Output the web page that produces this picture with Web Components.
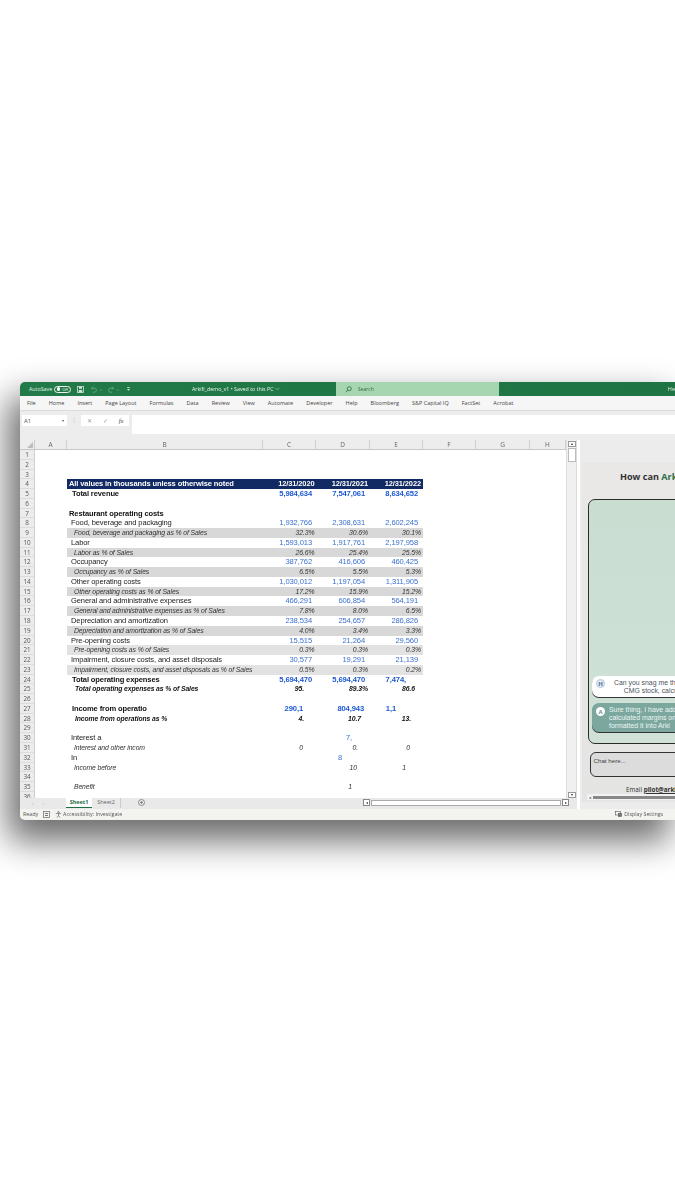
<!DOCTYPE html>
<html><head><meta charset="utf-8"><title>Arkifi demo</title>
<style>
html,body{margin:0;padding:0;background:#fff;overflow:hidden;height:1200px}
body{padding:382px 0 0 20px;box-sizing:border-box;font-family:"Liberation Sans",Arial,sans-serif}
</style></head><body>
<x-window>
  <x-titlebar></x-titlebar>
  <x-ribbon></x-ribbon>
  <x-formula></x-formula>
  <x-main>
    <x-sheet></x-sheet>
    <x-pane></x-pane>
  </x-main>
  <x-status></x-status>
</x-window>
<script>
function el(name,css,html){
  customElements.define(name,class extends HTMLElement{
    constructor(){super();this.attachShadow({mode:'open'}).innerHTML='<style>'+css+'</style>'+html;}
  });
}
const UI='"Open Sans","Noto Sans",sans-serif';
el('x-window',`:host{display:flex;flex-direction:column;width:655px;height:438px;background:#f1f1f1;border-radius:5px 0 0 5px;box-shadow:-9px 18px 34px 3px rgba(0,0,0,.58);filter:blur(.45px);overflow:hidden}`,`<slot></slot>`);

el('x-titlebar',`:host{display:flex;align-items:center;height:14px;background:linear-gradient(90deg,#217a48,#1f7444);color:#e6f2ea;font:5.3px ${UI};flex:none;position:relative}
.l{display:flex;align-items:center;margin-left:9px;width:163px}
.pill{display:flex;align-items:center;gap:2px;width:17px;height:7px;border:.7px solid #eaf4ee;border-radius:4px;box-sizing:border-box;padding-left:1.5px;font-size:4px;margin:0 6px 0 2px}
.pill i{width:3.5px;height:3.5px;border-radius:50%;background:#fff}
svg{display:block;flex:none}
.t{width:144px;text-align:left;color:#eef6f1}
.s{display:flex;align-items:center;gap:6px;width:163px;height:14px;background:#a5d6b0;color:#2c6a45;box-sizing:border-box;padding-left:9px;font-size:5px}
.he{margin-left:169px;font-size:5.5px}`,
`<div class="l"><span>AutoSave</span><span class="pill"><i></i>Off</span>
<svg style="margin-right:6px" width="7" height="7" viewBox="0 0 7 7"><rect x=".5" y=".5" width="6" height="6" fill="none" stroke="#cfe3d6" stroke-width=".8"/><rect x="2" y=".8" width="3" height="2" fill="#cfe3d6"/><rect x="1.7" y="4" width="3.6" height="2.4" fill="#cfe3d6"/></svg>
<svg style="margin-right:3px" width="14" height="7" viewBox="0 0 14 7" fill="none" stroke="#6fae88" stroke-width=".8"><path d="M1.5 2.2h3a2 2 0 0 1 0 4H3M1.5 2.2l1.5-1.5M1.5 2.2l1.5 1.5"/><path d="M10 3.5l1 1 1-1" /></svg>
<svg style="margin-right:5px" width="14" height="7" viewBox="0 0 14 7" fill="none" stroke="#6fae88" stroke-width=".8"><path d="M6.500 2.200h-3a2 2 0 0 0 0 4H5M6.500 2.200L5 .7M6.500 2.200L5 3.700"/><path d="M10 3.500l1 1 1-1"/></svg>
<svg width="5" height="6" viewBox="0 0 5 6" fill="#d6e8dc"><rect x="1" y="1" width="3" height=".7"/><path d="M1 3h3L2.500 4.800z"/></svg></div>
<div class="t">Arkifi_demo_v1 • Saved to this PC ﹀</div>
<div class="s"><svg width="7" height="7" viewBox="0 0 7 7" fill="none" stroke="#2c6a45" stroke-width=".8"><circle cx="4.300" cy="2.700" r="2"/><path d="M2.800 4.200L.8 6.200"/></svg><span>Search</span></div>
<div class="he">He</div>`);

el('x-ribbon',`:host{display:flex;align-items:center;height:15px;background:#f6f6f6;border-bottom:1px solid #dcdcdc;box-sizing:border-box;padding-left:7px;font:5.5px ${UI};color:#444;flex:none}
span{margin-right:13.07px;white-space:nowrap}`,
['File','Home','Insert','Page Layout','Formulas','Data','Review','View','Automate','Developer','Help','Bloomberg','S&amp;P Capital IQ','FactSet','Acrobat'].map(t=>`<span>${t}</span>`).join(''));

el('x-formula',`:host{display:flex;align-items:flex-start;gap:3px;height:29px;background:#ededed;box-sizing:border-box;padding:4px 0 0 2px;font:6px ${UI};color:#555;flex:none}
.nb{display:flex;align-items:center;justify-content:space-between;width:45px;height:11px;background:#fff;box-sizing:border-box;padding:0 3px 0 2px}
.sep{width:10px;height:11px;text-align:center;color:#bbb;line-height:11px;margin:0 -1px}
.fx{display:flex;align-items:center;justify-content:space-around;width:48px;height:11px;background:#fff;color:#999}
.fx b{font:italic 6.500px "Liberation Serif",serif;color:#444}
.in{flex:1;height:19px;background:#fff}`,
`<div class="nb"><span>A1</span><span style="font-size:4px">▾</span></div><div class="sep">⋮</div><div class="fx"><span>✕</span><span>✓</span><b>fx</b></div><div class="in"></div>`);

el('x-main',`:host{display:flex;height:369px;flex:none;overflow:hidden}`,`<slot></slot>`);

const cols=[['A',32],['B',196],['C',53],['D',54],['E',53],['F',53],['G',54],['H',36]];
const F='"Liberation Sans",Arial,sans-serif';
const pct=(l,a,b,c)=>({t:'p',l,v:[[a,1.5],[b,2],[c,2]]});
const num=(l,a,b,c)=>({t:'n',l,v:[[a,4],[b,5],[c,5]]});
const R={
4:{t:'h',l:'All values in thousands unless otherwise noted',v:[['12/31/2020',1.5],['12/31/2021',2],['12/31/2022',2]]},
5:{t:'b',l:'Total revenue',x:5,v:[['5,984,634',4],['7,547,061',5],['8,634,652',5]]},
7:{t:'s',l:'Restaurant operating costs'},
8:num('Food, beverage and packaging','1,932,766','2,308,631','2,602,245'),
9:pct('Food, beverage and packaging as % of Sales','32.3%','30.6%','30.1%'),
10:num('Labor','1,593,013','1,917,761','2,197,958'),
11:pct('Labor as % of Sales','26.6%','25.4%','25.5%'),
12:num('Occupancy','387,762','416,606','460,425'),
13:pct('Occupancy as % of Sales','6.5%','5.5%','5.3%'),
14:num('Other operating costs','1,030,012','1,197,054','1,311,905'),
15:pct('Other operating costs as % of Sales','17.2%','15.9%','15.2%'),
16:num('General and administrative expenses','466,291','606,854','564,191'),
17:pct('General and administrative expenses as % of Sales','7.8%','8.0%','6.5%'),
18:num('Depreciation and amortization','238,534','254,657','286,826'),
19:pct('Depreciation and amortization as % of Sales','4.0%','3.4%','3.3%'),
20:num('Pre-opening costs','15,515','21,264','29,560'),
21:{...pct('Pre-opening costs as % of Sales','0.3%','0.3%','0.3%'),g:1},
22:num('Impairment, closure costs, and asset disposals','30,577','19,291','21,139'),
23:{...pct('Impairment, closure costs, and asset disposals as % of Sales','0.5%','0.3%','0.2%'),g:1},
24:{t:'b',l:'Total operating expenses',x:5,v:[['5,694,470',4],['5,694,470',5],['7,474,',17]]},
25:{t:'bi',l:'Total operating expenses as % of Sales',v:[['95.',12],['89.3%',2],['86.6',8]]},
27:{t:'b',l:'Income from operatio',x:5,v:[['290,1',13],['804,943',6],['1,1',27]]},
28:{t:'bi',l:'Income from operations as %',v:[['4.',12],['10.7',9],['13.',12]]},
30:{t:'n',l:'Interest a',v:[['',0],['7,',18],['',0]]},
31:{t:'i',l:'Interest and other incom',v:[['0',13],['0.',12],['0',13]]},
32:{t:'n',l:'In',v:[['',0],['8',28],['',0]]},
33:{t:'i',l:'Income before',v:[['',0],['10',13],['1',17]]},
35:{t:'i',l:'Benefit',v:[['',0],['1',18],['',0]]}
};
let rows='';
for(let i=1;i<=36;i++){
  const r=R[i]||{t:'e',l:''};
  const x=r.x!==undefined?r.x:({h:2,s:2,n:4,p:7,bi:8,i:7,e:0})[r.t];
  rows+=`<div class="row ${r.t}${r.g?' g':''}"><div class="hd">${i}</div><div class="a"></div><div class="bb"><div class="lbl" style="padding-left:${x}px">${r.l}</div>`+
   `<div class="v" style="width:53px">${r.v?`<span style="padding-right:${r.v[0][1]}px">${r.v[0][0]}</span>`:''}</div>`+
   `<div class="v" style="width:54px">${r.v?`<span style="padding-right:${r.v[1][1]}px">${r.v[1][0]}</span>`:''}</div>`+
   `<div class="v" style="width:53px">${r.v?`<span style="padding-right:${r.v[2][1]}px">${r.v[2][0]}</span>`:''}</div></div></div>`;
}
el('x-sheet',`:host{display:grid;grid-template-columns:546px 11px;grid-template-rows:358px 11px;width:560px;flex:none;background:#fff;font-family:${F}}
.main{overflow:hidden;height:358px}
.ch{display:flex;height:9px;background:#ededed;border-bottom:.8px solid #c8c8c8;box-sizing:content-box;font:6.500px ${UI};color:#666}
.corner{width:15px;position:relative;background:#ededed;border-right:.5px solid #ccc;box-sizing:border-box}
.corner:after{content:"";position:absolute;right:1px;bottom:1px;border:solid transparent;border-width:0 0 6px 6px;border-bottom-color:#bdbdbd}
.ch div.c{text-align:center;border-right:.5px solid #d0d0d0;box-sizing:border-box;line-height:9px;flex:none}
.row{display:flex;height:9.77px;line-height:9.77px;font-size:7.55px;letter-spacing:-.12px;white-space:nowrap}
.hd{width:15px;flex:none;background:#ececec;border-right:.5px solid #cfcfcf;border-bottom:.5px solid #dcdcdc;box-sizing:border-box;font:6.300px/9.500px ${UI};color:#555;text-align:center;letter-spacing:0}
.a{width:32px;flex:none}
.bb{display:flex;width:356px;color:#222}
.lbl{width:196px;flex:none;box-sizing:border-box;overflow:visible;white-space:nowrap}
.v{flex:none;text-align:right;color:#3b70d0;overflow:visible;box-sizing:border-box;font-size:7.6px}
.h .bb{background:#112a63;color:#fff;font-weight:700}.h .v{color:#fff;font-size:7.500px}
.b .bb,.s .bb{font-weight:700;color:#111}.b .v{color:#1c59d4}
.p .bb{background:#d8d8d8;font-size:6.800px;letter-spacing:-.1px;font-style:italic;color:#333}.p .v{color:#333;font-size:6.900px}
.p.g .bb{background:#e2e2e2}
.bi .bb{font-size:6.800px;letter-spacing:-.1px;font-style:italic;font-weight:700;color:#111}.bi .v{color:#111;font-size:6.900px}
.i .bb{font-size:6.800px;letter-spacing:-.1px;font-style:italic;color:#333}.i .v{color:#333;font-size:6.900px}
.sv{grid-row:1;grid-column:2;display:flex;flex-direction:column;align-items:center;background:#f0f0f0;border-left:.5px solid #ddd;border-right:.5px solid #ddd;height:358px;box-sizing:border-box;padding-top:1px}
.btn{width:8px;height:6px;background:#fff;border:.5px solid #999;display:flex;align-items:center;justify-content:center;box-sizing:border-box;flex:none}
.btn i{border:solid transparent;border-width:0 1.5px 2px;border-bottom-color:#333}
.dn i{transform:rotate(180deg)}
.th{width:8px;height:14px;background:#fff;border:.5px solid #bbb;box-sizing:border-box;margin-top:1px}
.grow{flex:1}
.tabs{grid-row:2;grid-column:1/3;display:flex;align-items:center;height:11px;background:#e9e9e9;font:5.500px ${UI};color:#666;box-sizing:border-box;padding-bottom:1.5px}
.nav{width:46px;padding-left:12px;box-sizing:border-box;color:#aaa;font-size:5px;word-spacing:8px}
.t1{width:26px;height:9.500px;line-height:8.500px;text-align:center;background:#fff;color:#1d6b42;font-weight:700;border-bottom:1.2px solid #1d6b42;box-sizing:border-box}
.t2{width:28px;text-align:center;border-right:.5px solid #ccc;line-height:9.500px}
.add{margin-left:17px;flex:none}
.hs{margin-left:218px;display:flex;align-items:center;height:8px;gap:1px;flex:none;width:206px}
.hb{width:7px;height:7px;background:#fff;border:.5px solid #888;box-sizing:border-box;display:flex;align-items:center;justify-content:center;flex:none}
.hb i{border:solid transparent;border-width:1.5px 2px 1.5px 0;border-right-color:#333}
.hb.r i{transform:rotate(180deg)}
.ht{flex:1;height:6px;background:#fff;border:.5px solid #aaa;box-sizing:border-box}`,
`<div class="main"><div class="ch"><div class="corner"></div>${cols.map(c=>`<div class="c" style="width:${c[1]}px">${c[0]}</div>`).join('')}</div>${rows}</div>
<div class="sv"><div class="btn"><i></i></div><div class="th"></div><div class="grow"></div><div class="btn dn"><i></i></div></div>
<div class="tabs"><div class="nav">‹ ›</div><div class="t1">Sheet1</div><div class="t2">Sheet2</div>
<svg class="add" width="7" height="7" viewBox="0 0 7 7" fill="none" stroke="#555" stroke-width=".6"><circle cx="3.500" cy="3.500" r="3"/><path d="M3.500 2v3M2 3.500h3"/></svg>
<div class="hs"><div class="hb"><i></i></div><div class="ht"></div><div class="hb r"><i></i></div></div></div>`);

el('x-pane',`:host{display:block;flex:1;min-width:0;background:#ececec;overflow:hidden;padding:22px 0 0 2px;box-sizing:border-box;white-space:nowrap;font-family:${F}}
.card{width:160px;height:340px;background:linear-gradient(#e9e8e6,#e4e4e2);box-sizing:border-box;padding:8px 0 0 6px;display:flex;flex-direction:column}
h1{margin:0 0 0 32px;font:700 9.100px "Open Sans",sans-serif;color:#333;height:29px}
h1 span{color:#2f6b4a}
.box{width:150px;height:245px;flex:none;border:1.2px solid #2b2b2b;border-radius:7px 0 0 7px;background:linear-gradient(#c9ddd1,#d0e2d8);box-sizing:border-box;display:flex;flex-direction:column;justify-content:flex-end;padding:0 0 11px 3px;gap:6px}
.m{display:flex;border-radius:7px;font:6.900px/7.800px ${F};padding:3px 0 3px 4px;box-shadow:0 1px 0 #333}
.u{background:#fff;color:#4a5560;height:21px;box-sizing:border-box;padding-left:4px;gap:9px}
.a{background:#7ba79f;color:#eef5f2;height:29px;box-sizing:border-box;gap:4px}
.av{width:9px;height:9px;border-radius:50%;flex:none;display:flex;align-items:center;justify-content:center;font:700 6px "Open Sans",sans-serif}
.u .av{background:#dfe8f3;color:#4a6aa0;border:.5px solid #b8c8dc;box-sizing:border-box}
.a .av{background:#fff;color:#6d958e;margin-top:1px}
.c{text-align:center}.l{text-align:left}
.c span{margin-left:8px}
.in{width:150px;height:25px;flex:none;margin:8px 0 0 2px;border:1.2px solid #333;border-radius:6px 0 0 6px;background:#dcdcdc;box-sizing:border-box;font:6.200px/1 ${F};color:#444;padding:5px 2.500px}
.em{margin:8px 0 0 38px;font:6.300px "Open Sans",sans-serif;color:#333}
.em b{text-decoration:underline}
.hs{margin-left:-1px;display:flex;align-items:center;height:6px;background:#f2f2f2;gap:2px;padding-left:2px;font-size:4px;color:#555}
.hs i{flex:1;height:3px;background:#888}`,
`<div class="card"><h1>How can <span>Ark</span></h1>
<div class="box">
<div class="m u"><div class="av">H</div><div class="c">Can you snag me the<br><span>CMG stock, calcu</span></div></div>
<div class="m a"><div class="av">A</div><div class="l">Sure thing, I have adde<br>calculated margins on<br>formatted it into Arki</div></div>
</div>
<div class="in">Chat here...</div>
<div class="em">Email <b>pilot@arkifi</b></div>
<div class="hs"><span>◂</span><i></i></div>
</div>`);

el('x-status',`:host{display:flex;align-items:center;height:10px;background:#f3f3f0;font:5.300px ${UI};color:#555;padding-left:3px;flex:none;white-space:nowrap}
.r{margin-right:5px}
svg{display:block;flex:none}
.ds{display:flex;align-items:center;gap:2px;margin-left:493px}`,
`<span class="r">Ready</span>
<svg class="r" width="7" height="7" viewBox="0 0 7 7" fill="#777"><rect x=".5" y=".5" width="6" height="6" fill="none" stroke="#666" stroke-width=".7"/><rect x="2" y="2" width="3" height="1"/><rect x="2" y="4" width="3" height="1"/></svg>
<svg width="7" height="7" viewBox="0 0 7 7" fill="none" stroke="#555" stroke-width=".6" style="margin-right:1px"><circle cx="3.500" cy="1.300" r=".8"/><path d="M.8 2.600h5.400M3.500 2.600v2M3.500 4.600L2 6.500M3.500 4.600L5 6.500"/></svg>
<span>Accessibility: Investigate</span>
<div class="ds"><svg width="7" height="6" viewBox="0 0 7 6" fill="none" stroke="#555" stroke-width=".6"><rect x=".5" y=".5" width="5" height="3.500"/><rect x="3.500" y="2.500" width="3" height="3" fill="#777"/></svg><span>Display Settings</span></div>`);
</script>
</body></html>
